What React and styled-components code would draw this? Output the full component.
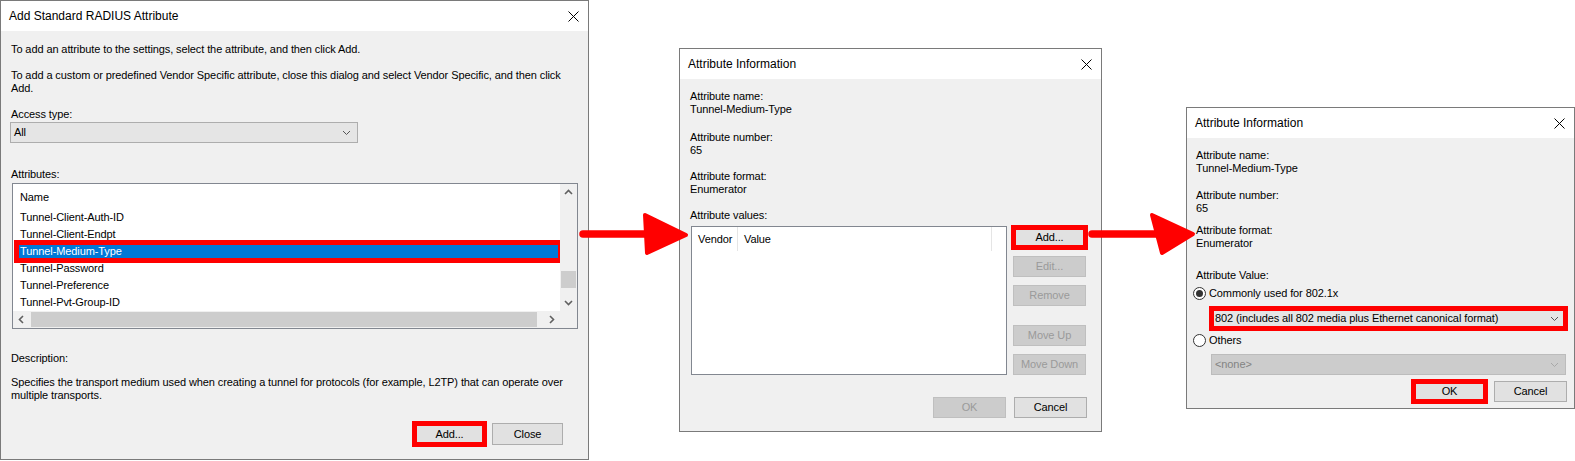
import React from 'react';
import styled, { createGlobalStyle, css } from 'styled-components';

const red = '#ff0000';
const face = '#f0f0f0';
const frame = '#7a7a7a';

const GlobalStyle = createGlobalStyle`
  * { box-sizing: border-box; }
  html, body {
    margin: 0;
    background: #fff;
  }
  body {
    font-family: 'Liberation Sans', Arial, sans-serif;
    font-size: 11px;
    letter-spacing: -0.1px;
    color: #000;
  }
`;

const Page = styled.div`
  position: relative;
  display: flex;
  align-items: flex-start;
  width: 1575px;
  height: 461px;
  overflow: hidden;
`;

const Window = styled.div`
  display: flex;
  flex-direction: column;
  flex: none;
  width: ${(p) => p.$w}px;
  height: ${(p) => p.$h}px;
  margin-top: ${(p) => p.$top || 0}px;
  margin-left: ${(p) => p.$left || 0}px;
  border: 1px solid ${frame};
  background: ${face};
`;

const TitleBar = styled.div`
  display: flex;
  align-items: center;
  justify-content: space-between;
  flex: none;
  height: 30px;
  padding-left: 8px;
  background: #fff;
  font-size: 12px;
  letter-spacing: 0;
`;

const CloseBox = styled.span`
  display: flex;
  align-items: center;
  justify-content: center;
  width: 30px;
  height: 30px;
`;

const Body = styled.div`
  flex: 1;
  display: flex;
  flex-direction: column;
  align-items: flex-start;
  padding: ${(p) => p.$pad};
  line-height: 13px;
`;

const Text = styled.p`
  margin: ${(p) => p.$mt || 0}px 0 0;
  white-space: nowrap;
`;

const InfoGroup = styled.div`
  margin-top: ${(p) => p.$mt || 0}px;
  white-space: nowrap;
`;

const Combo = styled.div`
  display: flex;
  align-items: center;
  justify-content: space-between;
  flex: none;
  width: ${(p) => p.$w}px;
  height: 21px;
  margin: ${(p) => p.$m || 0};
  padding: 0 6px 0 3px;
  border: 1px solid ${(p) => (p.$disabled ? '#bcbcbc' : '#adadad')};
  background: ${(p) => (p.$disabled ? '#cccccc' : '#e5e5e5')};
  color: ${(p) => (p.$disabled ? '#838383' : '#000')};
  ${(p) =>
    p.$marked &&
    css`
      outline: 5px solid ${red};
      outline-offset: -3px;
    `}
`;

const ChevronSvg = styled.svg`
  display: block;
  flex: none;
  transform: rotate(${(p) => p.$rot}deg);
`;

const Chevron = ({ dir = 'down', color = '#555', weight = 1 }) => {
  const rot = { down: 0, up: 180, left: 90, right: -90 }[dir];
  return (
    <ChevronSvg $rot={rot} width="9" height="9" viewBox="0 0 9 9">
      <path d="M1 3 L4.5 6.5 L8 3" fill="none" stroke={color} strokeWidth={weight} />
    </ChevronSvg>
  );
};

const CloseGlyph = () => (
  <svg width="11" height="11" viewBox="0 0 11 11">
    <path d="M0.5 0.5 L10.5 10.5 M10.5 0.5 L0.5 10.5" stroke="#000" strokeWidth="1" />
  </svg>
);

const Button = styled.button`
  display: flex;
  align-items: center;
  justify-content: center;
  flex: none;
  width: ${(p) => p.$w || 73}px;
  height: ${(p) => p.$h || 21}px;
  margin-top: ${(p) => p.$mt || 0}px;
  padding: 0;
  font: inherit;
  letter-spacing: inherit;
  border: 1px solid ${(p) => (p.disabled ? '#bfbfbf' : '#adadad')};
  background: ${(p) => (p.disabled ? '#cccccc' : '#e1e1e1')};
  color: ${(p) => (p.disabled ? '#9a9a9a' : '#000')};
  ${(p) =>
    p.$marked &&
    css`
      outline: 5px solid ${red};
      outline-offset: -3px;
    `}
`;

const Footer = styled.div`
  display: flex;
  justify-content: flex-end;
  gap: ${(p) => p.$gap}px;
  align-self: stretch;
  margin-top: auto;
`;

/* attribute list of the first dialog */
const ListFrame = styled.div`
  display: grid;
  grid-template-columns: 1fr 17px;
  grid-template-rows: 1fr 17px;
  flex: none;
  width: ${(p) => p.$w}px;
  height: ${(p) => p.$h}px;
  margin: ${(p) => p.$m || 0};
  border: 1px solid #828790;
  background: #fff;
`;

const ListItems = styled.div`
  display: flex;
  flex-direction: column;
  padding-top: 1px;
`;

const ListHeader = styled.div`
  display: flex;
  align-items: center;
  height: 24px;
  padding-left: 7px;
`;

const ListRow = styled.div`
  height: 17px;
  line-height: 17px;
  margin-left: 4px;
  padding-left: 3px;
  white-space: nowrap;
  ${(p) =>
    p.$selected &&
    css`
      background: #0078d7;
      color: #fff;
      outline: 5px solid ${red};
      outline-offset: -2px;
    `}
`;

const VScroll = styled.div`
  display: flex;
  flex-direction: column;
  background: ${face};
`;

const HScroll = styled.div`
  display: flex;
  align-items: center;
  background: ${face};
`;

const ScrollArrow = styled.div`
  display: flex;
  align-items: center;
  justify-content: center;
  flex: none;
  width: 17px;
  height: 17px;
`;

const ScrollGap = styled.div`
  flex: ${(p) => (p.$size ? 'none' : 1)};
  height: ${(p) => (p.$size ? `${p.$size}px` : 'auto')};
`;

const VThumb = styled.div`
  flex: none;
  height: 17px;
  margin: 0 1px;
  background: #cdcdcd;
`;

const HThumb = styled.div`
  flex: none;
  width: 506px;
  height: 15px;
  margin-left: 1px;
  background: #cdcdcd;
`;

const ScrollCorner = styled.div`
  background: ${face};
`;

/* values list of the second dialog */
const ValuesRow = styled.div`
  display: flex;
  gap: 6px;
  margin: 4px 0 0 1px;
`;

const ValueList = styled.div`
  flex: none;
  width: 316px;
  height: 149px;
  border: 1px solid #828790;
  background: #fff;
`;

const ColumnHeads = styled.div`
  display: flex;
  height: 24px;
`;

const ColumnHead = styled.div`
  display: flex;
  align-items: center;
  flex: none;
  width: ${(p) => p.$w}px;
  padding-left: 6px;
  border-right: 1px solid #e5e5e5;
`;

const ButtonColumn = styled.div`
  display: flex;
  flex-direction: column;
  gap: 8px;
  padding-top: 1px;
`;

/* radios of the third dialog */
const RadioRow = styled.div`
  display: flex;
  align-items: center;
  gap: 3px;
  height: 14px;
  margin: ${(p) => p.$mt}px 0 0 -3px;
  white-space: nowrap;
`;

const RadioDot = styled.span`
  display: flex;
  align-items: center;
  justify-content: center;
  flex: none;
  width: 13px;
  height: 13px;
  border: 1px solid #333;
  border-radius: 50%;
  background: #fff;

  &::after {
    content: '';
    display: ${(p) => (p.$checked ? 'block' : 'none')};
    width: 7px;
    height: 7px;
    border-radius: 50%;
    background: #333;
  }
`;

const ArrowSvg = styled.svg`
  position: absolute;
  left: ${(p) => p.$x}px;
  top: ${(p) => p.$y}px;
  overflow: visible;
  pointer-events: none;
`;

const Arrow = ({ x, y, shaft, head }) => (
  <ArrowSvg $x={x} $y={y} width="120" height="60" viewBox="0 0 120 60">
    <line x1={shaft[0]} y1="29" x2={shaft[1]} y2="29" stroke={red} strokeWidth="7.5" strokeLinecap="round" />
    <polygon points={head} fill={red} stroke={red} strokeWidth="4" strokeLinejoin="round" />
  </ArrowSvg>
);

const DialogTitle = ({ children }) => (
  <TitleBar>
    <span>{children}</span>
    <CloseBox>
      <CloseGlyph />
    </CloseBox>
  </TitleBar>
);

const Info = ({ label, value, mt }) => (
  <InfoGroup $mt={mt}>
    <div>{label}</div>
    <div>{value}</div>
  </InfoGroup>
);

const attributes = [
  'Tunnel-Client-Auth-ID',
  'Tunnel-Client-Endpt',
  'Tunnel-Medium-Type',
  'Tunnel-Password',
  'Tunnel-Preference',
  'Tunnel-Pvt-Group-ID',
];

const sideButtons = [
  { label: 'Add...', marked: true },
  { label: 'Edit...', disabled: true },
  { label: 'Remove', disabled: true },
  { label: 'Move Up', disabled: true, mt: 11 },
  { label: 'Move Down', disabled: true },
];

const App = () => (
  <>
    <GlobalStyle />
    <Page>
      <Window $w={589} $h={460}>
        <DialogTitle>Add Standard RADIUS Attribute</DialogTitle>
        <Body $pad="12px 25px 14px 10px">
          <Text>To add an attribute to the settings, select the attribute, and then click Add.</Text>
          <Text $mt={13}>
            To add a custom or predefined Vendor Specific attribute, close this dialog and select Vendor Specific, and then click
            <br />
            Add.
          </Text>
          <Text $mt={13}>Access type:</Text>
          <Combo $w={348} $m="1px 0 0 -1px">
            <span>All</span>
            <Chevron />
          </Combo>
          <Text $mt={25}>Attributes:</Text>
          <ListFrame $w={566} $h={146} $m="2px 0 0 1px">
            <ListItems>
              <ListHeader>Name</ListHeader>
              {attributes.map((name) => (
                <ListRow key={name} $selected={name === 'Tunnel-Medium-Type'}>
                  {name}
                </ListRow>
              ))}
            </ListItems>
            <VScroll>
              <ScrollArrow>
                <Chevron dir="up" color="#606060" weight={1.6} />
              </ScrollArrow>
              <ScrollGap $size={70} />
              <VThumb />
              <ScrollGap />
              <ScrollArrow>
                <Chevron dir="down" color="#606060" weight={1.6} />
              </ScrollArrow>
            </VScroll>
            <HScroll>
              <ScrollArrow>
                <Chevron dir="left" color="#606060" weight={1.6} />
              </ScrollArrow>
              <HThumb />
              <ScrollGap />
              <ScrollArrow>
                <Chevron dir="right" color="#606060" weight={1.6} />
              </ScrollArrow>
            </HScroll>
            <ScrollCorner />
          </ListFrame>
          <Text $mt={23}>Description:</Text>
          <Text $mt={11}>
            Specifies the transport medium used when creating a tunnel for protocols (for example, L2TP) that can operate over
            <br />
            multiple transports.
          </Text>
          <Footer $gap={7}>
            <Button $w={71} $h={22} $marked>
              Add...
            </Button>
            <Button $w={71} $h={22}>
              Close
            </Button>
          </Footer>
        </Body>
      </Window>

      <Window $w={423} $h={384} $top={48} $left={90}>
        <DialogTitle>Attribute Information</DialogTitle>
        <Body $pad="11px 14px 13px 10px">
          <Info label="Attribute name:" value="Tunnel-Medium-Type" />
          <Info label="Attribute number:" value="65" mt={15} />
          <Info label="Attribute format:" value="Enumerator" mt={13} />
          <Text $mt={13}>Attribute values:</Text>
          <ValuesRow>
            <ValueList>
              <ColumnHeads>
                <ColumnHead $w={46}>Vendor</ColumnHead>
                <ColumnHead $w={254}>Value</ColumnHead>
              </ColumnHeads>
            </ValueList>
            <ButtonColumn>
              {sideButtons.map((b) => (
                <Button key={b.label} disabled={b.disabled} $marked={b.marked} $mt={b.mt}>
                  {b.label}
                </Button>
              ))}
            </ButtonColumn>
          </ValuesRow>
          <Footer $gap={8}>
            <Button disabled>OK</Button>
            <Button>Cancel</Button>
          </Footer>
        </Body>
      </Window>

      <Window $w={389} $h={302} $top={107} $left={84}>
        <DialogTitle>Attribute Information</DialogTitle>
        <Body $pad="11px 7px 6px 9px">
          <Info label="Attribute name:" value="Tunnel-Medium-Type" />
          <Info label="Attribute number:" value="65" mt={14} />
          <Info label="Attribute format:" value="Enumerator" mt={9} />
          <Text $mt={19}>Attribute Value:</Text>
          <RadioRow $mt={4}>
            <RadioDot $checked />
            <span>Commonly used for 802.1x</span>
          </RadioRow>
          <Combo $w={355} $m="8px 0 0 15px" $marked>
            <span>802 (includes all 802 media plus Ethernet canonical format)</span>
            <Chevron />
          </Combo>
          <RadioRow $mt={4}>
            <RadioDot />
            <span>Others</span>
          </RadioRow>
          <Combo $w={355} $m="7px 0 0 15px" $disabled>
            <span>&lt;none&gt;</span>
            <Chevron color="#a8a8a8" />
          </Combo>
          <Footer $gap={8}>
            <Button $marked>OK</Button>
            <Button>Cancel</Button>
          </Footer>
        </Body>
      </Window>

      <Arrow x={575} y={205} shaft={[8, 73]} head="70,10 111,30 72,48" />
      <Arrow x={1083} y={205} shaft={[9, 75]} head="69,10 110,29 79,48" />
    </Page>
  </>
);

export default App;
